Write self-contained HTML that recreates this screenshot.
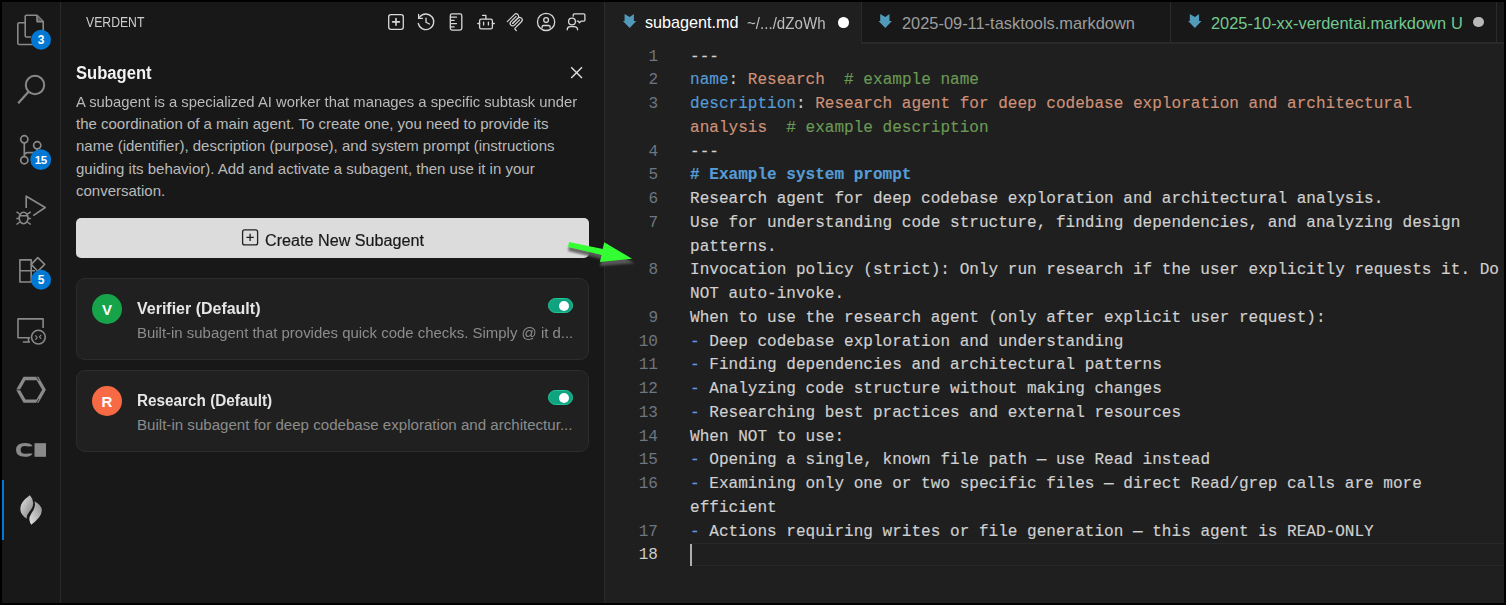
<!DOCTYPE html>
<html><head><meta charset="utf-8">
<style>
*{margin:0;padding:0;box-sizing:border-box}
html,body{width:1506px;height:605px;overflow:hidden;background:#000}
body{position:relative;font-family:"Liberation Sans",sans-serif}
.sx{transform-origin:0 0;white-space:pre}
.abs{position:absolute}
#act{left:2px;top:2px;width:58px;height:601px;background:#181818}
#actb{left:60px;top:2px;width:1px;height:601px;background:#2b2b2b}
#side{left:61px;top:2px;width:543px;height:601px;background:#181818}
#sideb{left:604px;top:2px;width:1px;height:601px;background:#2b2b2b}
#ed{left:605px;top:2px;width:899px;height:601px;background:#1f1f1f}
#tabs{left:605px;top:2px;width:899px;height:42px;background:#181818}
.tab{position:absolute;top:0;height:42px;border-right:1px solid #2b2b2b;border-bottom:2px solid #292929;background:#181818}
.tab.active{background:#1f1f1f;border-bottom:none}
.tt{position:absolute;white-space:pre;font-size:16.4px;top:13px;line-height:20px}
.code{position:absolute;left:690px;font-family:"Liberation Mono",monospace;font-size:16.06px;color:#d0d0d0;-webkit-text-stroke:0.15px currentColor}
.row{height:23.757px;line-height:23.757px;white-space:pre}
.ln{position:absolute;left:605px;width:53px;text-align:right;font-family:"Liberation Mono",monospace;font-size:16.04px;color:#6e7681}
.li{color:#6796e6}.k{color:#569cd6}.s{color:#ce9178}.c{color:#6a9955}.h{color:#569cd6;font-weight:bold}
.desc{position:absolute;left:76px;top:91px;font-size:15px;line-height:22.2px;color:#bababa;white-space:pre}
.card{position:absolute;left:76px;width:513px;height:82px;background:#202020;border:1px solid #2c2c2c;border-radius:9px}
.av{position:absolute;left:15px;top:15px;width:30px;height:30px;border-radius:50%;color:#fff;font-weight:bold;font-size:15px;text-align:center;line-height:32px}
.ctitle{position:absolute;left:60px;top:20.7px;font-size:15.6px;transform-origin:0 0;font-weight:bold;color:#e6e6e6;white-space:pre;line-height:18px}
.csub{position:absolute;left:60px;top:44.5px;font-size:15.1px;transform-origin:0 0;color:#8c8c8c;white-space:pre;line-height:18px}
.tog{position:absolute;left:471px;top:19px;width:25px;height:15px;border-radius:8px;background:#10a37f;border:1px solid #1fc79a}
.tog::after{content:"";position:absolute;left:10px;top:2px;width:10px;height:10px;border-radius:50%;background:#fff}
</style></head><body>
<div id="act" class="abs"></div>
<div id="actb" class="abs"></div>
<div id="side" class="abs"></div>
<div id="sideb" class="abs"></div>
<div id="ed" class="abs"></div>

<!-- activity bar icons -->
<div class="abs" style="left:2px;top:480px;width:1.5px;height:60px;background:#0078d4"></div>
<svg class="abs" style="left:0;top:0" width="62" height="605" viewBox="0 0 62 605">
 <defs>
  <linearGradient id="fl1" x1="0" y1="0" x2="1" y2="1"><stop offset="0" stop-color="#e8e8e8"/><stop offset="1" stop-color="#7a7a7a"/></linearGradient>
  <linearGradient id="fl2" x1="1" y1="0" x2="0" y2="1"><stop offset="0" stop-color="#8a8a8a"/><stop offset="1" stop-color="#e6e6e6"/></linearGradient>
 </defs>
 <g fill="none" stroke="#898989" stroke-width="1.6" stroke-linejoin="round">
  <!-- explorer -->
  <path d="M25.2 22.8H19.2Q17.8 22.8 17.8 24.2V43.2Q17.8 44.5 19.2 44.5H33"/>
  <path d="M26.5 15.3H37L43.2 21.5V34M31 37H26.5Q25.2 37 25.2 35.7V16.6Q25.2 15.3 26.5 15.3"/>
  <path d="M37 15.6V21.6H43" fill="#5a5a5a"/>
  <!-- search -->
  <circle cx="35" cy="85" r="9.2" stroke-width="2"/>
  <path d="M28.3 92L18.2 103.2" stroke-width="2.2"/>
  <!-- source control -->
  <circle cx="24.3" cy="139.3" r="3.6" stroke-width="1.7"/>
  <circle cx="37.2" cy="145.3" r="3.6" stroke-width="1.7"/>
  <circle cx="24.3" cy="160.2" r="3.6" stroke-width="1.7"/>
  <path d="M24.3 143V156.5M37.2 149Q37.2 152.7 33 152.7H28Q24.3 152.7 24.3 156" stroke-width="1.7"/>
  <!-- run debug -->
  <path d="M26.2 208V196.2L45.2 207.5L33.2 215.6" stroke-width="1.7"/>
  <ellipse cx="23.6" cy="218" rx="4.4" ry="5.8" stroke-width="1.6"/>
  <path d="M19.5 215.8H27.8M16.5 211.8L19.8 214M30.8 211.8L27.4 214M16.3 218.6H19.2M28 218.6H30.9M16.5 224.5L19.8 222M30.8 224.5L27.4 222" stroke-width="1.5"/>
  <!-- extensions -->
  <path d="M35.5 282H19.9V259.9H31.2V282M19.9 270.8H35" stroke-width="1.6"/>
  <path d="M37.8 257.6L44.7 264.4L37.8 271.2L31.2 264.4Z" stroke-width="1.6"/>
  <!-- remote -->
  <path d="M30 337.8H18V318.9H43.1V328" stroke-width="1.6"/>
  <path d="M22.8 342H30M28.5 338V342" stroke-width="1.6"/>
  <circle cx="38.4" cy="337.1" r="6.9" stroke-width="1.6"/>
  <path d="M35.4 335.4L37.2 337.6L35.4 339.8M41.3 334.8L39.4 336.8L41.3 338.8" stroke-width="1.1"/>
  <!-- hex -->
  <path d="M24.5 378.5H37.5L44 389.8L37.5 401.1H24.5L18 389.8Z" stroke="#8a8a8a" stroke-width="3.3" stroke-linejoin="miter"/>
  <path d="M36.2 376.2L39 380.8M36.2 403.4L39 398.8M15.5 389.8H20" stroke="#181818" stroke-width="0.8"/>
 </g>
 <!-- C square -->
 <path d="M32.6 446.2Q31 442.9 24.8 442.9Q16 442.9 16 449.8Q16 456.8 24.8 456.8Q31 456.8 32.6 453.4L28.4 453.4Q27.4 453.8 24.8 453.8Q20.6 453.8 20.6 449.8Q20.6 446 24.8 446Q27.4 446 28.4 446.4Z" fill="#8a8a8a"/>
 <rect x="34.5" y="443.2" width="11.5" height="13.6" fill="#8a8a8a"/>
 <!-- flame -->
 <path d="M29.9 495.3Q20.3 502 20.3 508.5Q20.3 515 26.9 518.8Q26.2 515.5 29.5 511.5Q33.5 507 33.2 503Q32.8 498.5 29.9 495.3Z" fill="url(#fl1)"/>
 <path d="M34.5 501.2Q41.8 505 41.8 510.5Q41.8 517 31.2 524.7Q28.5 520.5 29.8 516.5Q31 513.5 33.5 510Q35.8 506 34.5 501.2Z" fill="url(#fl2)"/>
 <!-- badges -->
 <g fill="#0078d4">
  <circle cx="41" cy="39.7" r="10"/>
  <circle cx="40.7" cy="159.7" r="10.4"/>
  <circle cx="41.1" cy="279.8" r="10"/>
 </g>
 <g fill="#ffffff" font-family="Liberation Sans" font-weight="bold" font-size="12" text-anchor="middle">
  <text x="41" y="44">3</text>
  <text x="40.7" y="164" font-size="11.5" letter-spacing="-0.5">15</text>
  <text x="41.1" y="284">5</text>
 </g>
</svg>

<!-- sidebar -->
<div class="abs sx" style="left:86px;top:15.4px;font-size:13.75px;color:#cccccc;transform:scaleX(0.889)">VERDENT</div>
<div class="abs sx" style="left:76px;top:62.6px;font-size:18px;font-weight:bold;color:#f2f2f2;transform:scaleX(0.922)">Subagent</div>
<div class="desc"><span class="sx" style="display:inline-block;transform:scaleX(0.987)">A subagent is a specialized AI worker that manages a specific subtask under</span>
the coordination of a main agent. To create one, you need to provide its
name (identifier), description (purpose), and system prompt (instructions
guiding its behavior). Add and activate a subagent, then use it in your
conversation.</div>
<div class="abs" style="left:76px;top:218px;width:513px;height:40px;background:#dcdcdc;border-radius:5px"></div>
<div class="abs" style="left:265px;top:230.5px;font-size:16px;color:#1a1a1a;line-height:20px;white-space:pre;transform:scaleX(1.01);transform-origin:0 0;-webkit-text-stroke:0.2px #1a1a1a">Create New Subagent</div>

<div class="card" style="top:278px">
  <div class="av" style="background:#16a34a">V</div>
  <div class="ctitle" style="transform:scaleX(1.025)">Verifier (Default)</div>
  <div class="csub" style="transform:scaleX(0.99)">Built-in subagent that provides quick code checks. Simply @ it d...</div>
  <div class="tog"></div>
</div>
<div class="card" style="top:370px">
  <div class="av" style="background:#f86a43">R</div>
  <div class="ctitle" style="transform:scaleX(0.981)">Research (Default)</div>
  <div class="csub">Built-in subagent for deep codebase exploration and architectur...</div>
  <div class="tog"></div>
</div>

<!-- header icons -->
<svg class="abs" style="left:370px;top:0" width="230" height="90" viewBox="370 0 230 90">
 <g fill="none" stroke="#d8d8d8" stroke-width="1.3" stroke-linecap="round" stroke-linejoin="round">
  <rect x="388.7" y="14.7" width="14.6" height="14.6" rx="2.2"/>
  <path d="M392.6 21.9H399.4M396 18.5V25.3" stroke-width="1.6"/>
  <!-- history -->
  <path d="M419.6 17.2A7.8 7.8 0 1 1 418.3 23.5"/>
  <path d="M418.6 14.4V18.4H422.4"/>
  <path d="M426 18.2V22.2L429.4 24"/>
  <!-- ruler/book -->
  <rect x="450.3" y="13.9" width="11.5" height="16.2" rx="1.8"/>
  <path d="M450.8 17.2H456.5M450.8 20.4H454.1M450.8 23.6H456.5M450.8 26.9H454.1"/>
  <!-- robot -->
  <rect x="479.6" y="19.2" width="12.8" height="9.7" rx="1.7"/>
  <path d="M477.8 23.5H479.6M492.4 23.5H494.3M485.9 18.9V15.4H482.6M483.6 22.2V24.9M488.4 22.2V24.9"/>
  <!-- coil -->
  <g transform="translate(504.7 11.5) scale(0.104)" stroke-width="11.5">
   <path d="M25 97.85L92.88 29.97C102.26 20.6 117.45 20.6 126.82 29.97C136.2 39.34 136.2 54.54 126.82 63.91L75.56 115.18"/>
   <path d="M76.27 114.47L126.82 63.91C136.2 54.54 151.39 54.54 160.77 63.91L161.12 64.27C170.49 73.64 170.49 88.83 161.12 98.21L99.72 159.6C96.6 162.72 96.6 167.79 99.72 170.91L112.33 183.52"/>
   <path d="M109.85 46.94L59.65 97.15C50.28 106.52 50.28 121.71 59.65 131.09C69.02 140.46 84.22 140.46 93.59 131.09L143.79 80.88"/>
  </g>
  <!-- account -->
  <circle cx="546.1" cy="21.9" r="8.6"/>
  <circle cx="546.1" cy="20.1" r="2.4"/>
  <path d="M542.1 27.8V26.8Q542.1 25.5 543.5 25.5H548.7Q550.1 25.5 550.1 26.8V27.8"/>
  <!-- person chat -->
  <circle cx="572" cy="21.5" r="3.4"/>
  <path d="M567.2 29.8Q567.2 26.6 570 26.6H574Q577.6 26.6 577.6 29.8"/>
  <path d="M573.2 16.2V15Q573.2 13.9 574.3 13.9H583.8Q584.9 13.9 584.9 15V20.1Q584.9 21.2 583.8 21.2H581.2L579.3 22.8L578.6 21.2H577.2"/>
 </g>
 <!-- close x -->
 <path d="M571.2 67.2L582 78M582 67.2L571.2 78" stroke="#e0e0e0" stroke-width="1.4" fill="none"/>
</svg>
<!-- create button icon -->
<svg class="abs" style="left:240px;top:228px" width="20" height="20" viewBox="240 228 20 20">
 <rect x="242.6" y="229.9" width="15" height="15" rx="2" fill="none" stroke="#222" stroke-width="1.3"/>
 <path d="M246.4 237.4H253.8M250.1 233.7V241.1" stroke="#222" stroke-width="1.3"/>
</svg>

<!-- tabs -->
<div id="tabs" class="abs">
  <div class="tab active" style="left:0;width:257px"></div>
  <div class="tab" style="left:257px;width:309px"></div>
  <div class="tab" style="left:566px;width:326px"></div>
  <div class="abs" style="left:892px;top:40px;width:7px;height:2px;background:#292929"></div>
</div>
<div class="tt" style="left:645px;color:#ffffff;font-size:16.2px;top:12.2px">subagent.md</div>
<div class="tt" style="left:747px;color:#bdbdbd;font-size:16.2px;top:12.5px;transform:scaleX(0.934);transform-origin:0 0">~/.../dZoWh</div>
<div class="abs" style="left:838.2px;top:17.2px;width:10.5px;height:10.5px;border-radius:50%;background:#fff"></div>
<div class="tt" style="left:902px;color:#9d9d9d">2025-09-11-tasktools.markdown</div>
<div class="tt" style="left:1211px;color:#73c991">2025-10-xx-verdentai.markdown</div>
<div class="tt" style="left:1451px;color:#73c991">U</div>
<div class="abs" style="left:1473.3px;top:16.9px;width:10.5px;height:10.5px;border-radius:50%;background:#b8b8b8"></div>

<svg class="abs" style="left:605px;top:2px" width="899" height="42" viewBox="605 2 899 42">
 <g fill="#519aba">
  <path d="M624.6 14L629.7 16.9L633.9 14V21.1H636.3L629.7 28L622.9 21.1H624.6Z"/>
  <path d="M880.2 14L885.3 16.9L889.5 14V21.1H891.9L885.3 28L878.5 21.1H880.2Z"/>
  <path d="M1189.8 14L1194.9 16.9L1199.1 14V21.1H1201.5L1194.9 28L1188.1 21.1H1189.8Z"/>
 </g>
</svg>

<!-- editor -->
<div class="abs" style="left:690px;top:542.7px;width:814px;height:23.75px;border-top:1.25px solid #282828;border-bottom:1.25px solid #282828"></div>
<div class="abs" style="left:690px;top:544px;width:2px;height:22px;background:#aeafad"></div>
<div class="ln" style="top:45.6px">
<div class="row">1</div><div class="row">2</div><div class="row">3</div><div class="row"></div><div class="row">4</div><div class="row">5</div><div class="row">6</div><div class="row">7</div><div class="row"></div><div class="row">8</div><div class="row"></div><div class="row">9</div><div class="row">10</div><div class="row">11</div><div class="row">12</div><div class="row">13</div><div class="row">14</div><div class="row">15</div><div class="row">16</div><div class="row"></div><div class="row">17</div><div class="row" style="color:#cccccc">18</div>
</div>
<div class="code" style="top:45.6px">
<div class="row">---</div>
<div class="row"><span class="k">name</span>: <span class="s">Research</span>  <span class="c"># example name</span></div>
<div class="row"><span class="k">description</span>: <span class="s">Research agent for deep codebase exploration and architectural</span></div>
<div class="row"><span class="s">analysis</span>  <span class="c"># example description</span></div>
<div class="row">---</div>
<div class="row h"># Example system prompt</div>
<div class="row">Research agent for deep codebase exploration and architectural analysis.</div>
<div class="row">Use for understanding code structure, finding dependencies, and analyzing design</div>
<div class="row">patterns.</div>
<div class="row">Invocation policy (strict): Only run research if the user explicitly requests it. Do</div>
<div class="row">NOT auto-invoke.</div>
<div class="row">When to use the research agent (only after explicit user request):</div>
<div class="row"><span class="li">-</span> Deep codebase exploration and understanding</div>
<div class="row"><span class="li">-</span> Finding dependencies and architectural patterns</div>
<div class="row"><span class="li">-</span> Analyzing code structure without making changes</div>
<div class="row"><span class="li">-</span> Researching best practices and external resources</div>
<div class="row">When NOT to use:</div>
<div class="row"><span class="li">-</span> Opening a single, known file path — use Read instead</div>
<div class="row"><span class="li">-</span> Examining only one or two specific files — direct Read/grep calls are more</div>
<div class="row">efficient</div>
<div class="row"><span class="li">-</span> Actions requiring writes or file generation — this agent is READ-ONLY</div>
<div class="row"></div>
</div>


<!-- annotation arrow -->
<svg class="abs" style="left:550px;top:230px" width="100" height="45" viewBox="550 230 100 45">
 <defs><filter id="blr" x="-20%" y="-50%" width="140%" height="200%"><feGaussianBlur stdDeviation="0.9"/></filter></defs>
 <polygon points="569,245.9 602.8,252.9 604.2,246.2 634.5,263.2 599.9,265.9 601.6,259 568.1,250.9" fill="#5c5c5c" opacity="0.9" filter="url(#blr)"/>
 <polygon points="569,241.9 602.8,248.9 604.2,242.2 632,258.7 599.9,261.9 601.6,255 568.1,246.9" fill="#33ff33"/>
</svg>
</body></html>
